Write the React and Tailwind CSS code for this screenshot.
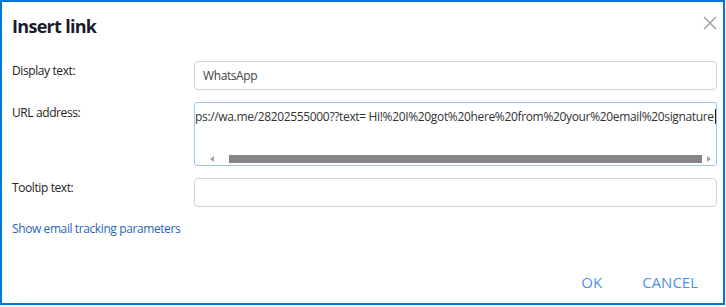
export default function App() {
  const font = { fontFamily: '"Open Sans", "Noto Sans", Arial, sans-serif' };
  return (
    <div className="w-[726px] h-[307px] bg-white">
      <div
        className="w-[725px] h-[305px] border-2 border-[#0078d7] bg-white flex flex-col"
        style={font}
      >
        <div className="h-[59px] flex justify-between items-start pl-[10px] pr-[6px]">
          <h1 className="mt-[12px] text-[18px] leading-[24px] font-bold text-[#1b1b2f] tracking-[-0.7px]">
            Insert link
          </h1>
          <svg
            className="mt-[14px]"
            width="14"
            height="14"
            viewBox="0 0 14 14"
          >
            <path d="M1 1 L13 13 M13 1 L1 13" stroke="#9a9a9a" strokeWidth="1.4" />
          </svg>
        </div>

        <div className="flex flex-col gap-[12px] pl-[10px] pr-[6px] text-[12px] tracking-[-0.4px]">
          <div className="flex items-start">
            <div className="w-[182px] pt-[2px] leading-[16px] text-[#222]">
              Display text:
            </div>
            <div className="flex-1 h-[29px] border border-[#d2d2d2] rounded-[4px] flex items-center pl-[8px] text-[#444]">
              WhatsApp
            </div>
          </div>

          <div className="flex items-start">
            <div className="w-[182px] pt-[3px] leading-[16px] text-[#222]">
              URL address:
            </div>
            <div className="flex-1 h-[64px] border border-[#9cc6f2] rounded-[3px] flex flex-col overflow-hidden">
              <div className="h-[16px] mt-[6px] whitespace-nowrap leading-[16px] text-[#333] flex">
                <span className="tracking-[-0.34px]">
                  ps://wa.me/28202555000??text= Hi!%20I%20got%20here%20from%20your%20email%20signature
                </span>
                <span className="inline-block shrink-0 w-[1px] h-[15px] bg-[#222] ml-[1px]"></span>
              </div>
              <div className="mt-auto mb-[2px] h-[8px] flex items-center">
                <div className="w-[34px] flex justify-center">
                  <svg width="4" height="6" viewBox="0 0 4 6">
                    <path d="M4 0 L0 3 L4 6 Z" fill="#a0a0a0" />
                  </svg>
                </div>
                <div className="flex-1 h-[8px] bg-[#858585]"></div>
                <div className="w-[14px] flex justify-center">
                  <svg width="4" height="6" viewBox="0 0 4 6">
                    <path d="M0 0 L4 3 L0 6 Z" fill="#a0a0a0" />
                  </svg>
                </div>
              </div>
            </div>
          </div>

          <div className="flex items-start">
            <div className="w-[182px] pt-[2px] leading-[16px] text-[#222]">
              Tooltip text:
            </div>
            <div className="flex-1 h-[29px] border border-[#d2d2d2] rounded-[4px]"></div>
          </div>
        </div>

        <div className="pl-[10px] mt-[14px] text-[12px] leading-[16px] tracking-[-0.4px] text-[#2a66b8]">
          Show email tracking parameters
        </div>

        <div className="mt-auto mb-[11px] flex justify-end pr-[25px] gap-[40px] text-[15px] leading-[20px] text-[#4d92ee]">
          <span>OK</span>
          <span>CANCEL</span>
        </div>
      </div>
    </div>
  );
}
